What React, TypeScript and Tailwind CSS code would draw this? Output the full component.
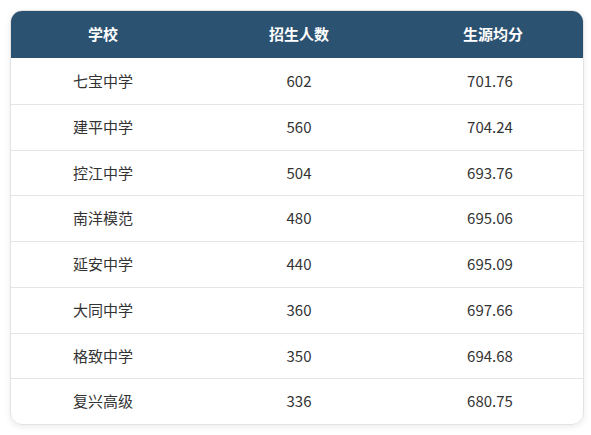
import React from 'react'

const ROWS = [
    { school: '七宝中学', count: 602, score: '701.76' },
    { school: '建平中学', count: 560, score: '704.24' },
    { school: '控江中学', count: 504, score: '693.76' },
    { school: '南洋模范', count: 480, score: '695.06' },
    { school: '延安中学', count: 440, score: '695.09' },
    { school: '大同中学', count: 360, score: '697.66' },
    { school: '格致中学', count: 350, score: '694.68' },
    { school: '复兴高级', count: 336, score: '680.75' },
]

const font = { fontFamily: '"Noto Sans CJK SC", "Noto Sans", sans-serif' }

export default function App() {
    return (
        <div className="w-[591px] h-[435px] bg-white pt-[10px] pl-[10px]" style={font}>
            <div className="w-[574px] rounded-[12px] overflow-hidden border border-[#e3e3e3] shadow-[0_2px_6px_rgba(0,0,0,0.08)]">
                <div className="grid grid-cols-[184px_208px_1fr] h-[47px] items-center bg-[#2c5272] text-white text-[15px] font-bold text-center">
                    <div>学校</div>
                    <div>招生人数</div>
                    <div>生源均分</div>
                </div>
                {ROWS.map((row, i) => (
                    <div
                        key={row.school}
                        className={`grid grid-cols-[184px_208px_1fr] h-[45.75px] items-center text-center text-[15px] text-[#333] ${i > 0 ? 'border-t border-[#e5e5e5]' : ''}`}
                    >
                        <div>{row.school}</div>
                        <div>{row.count}</div>
                        <div className="pr-[6px]">{row.score}</div>
                    </div>
                ))}
            </div>
        </div>
    )
}
